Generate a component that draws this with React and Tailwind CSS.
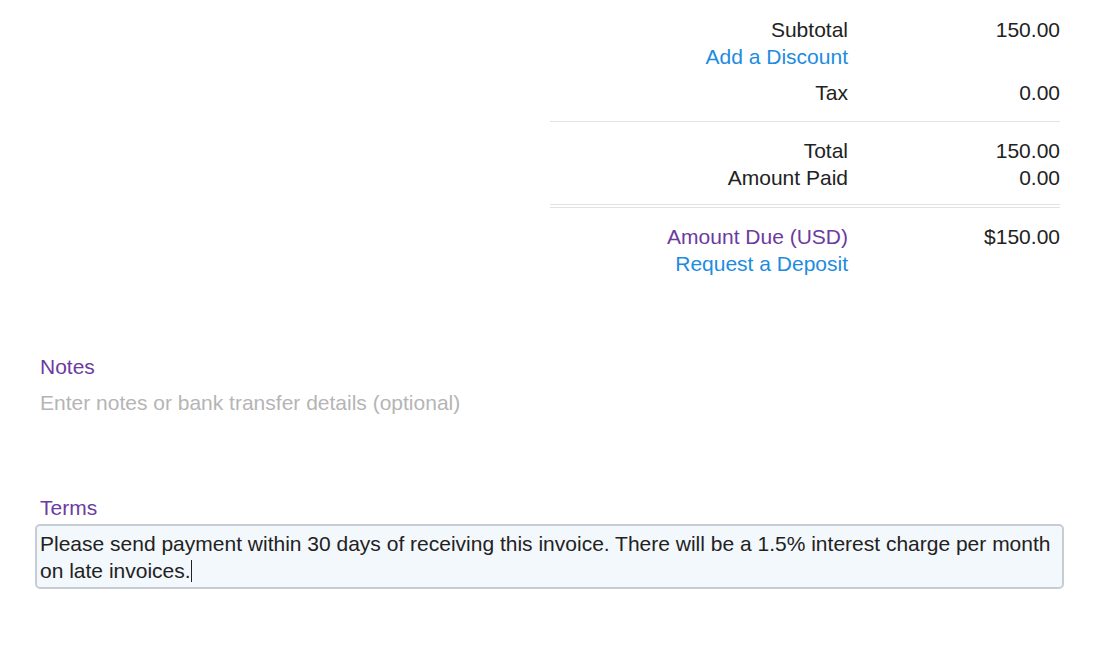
import React from "react";

const font = { fontFamily: '"Liberation Sans", Arial, sans-serif' };

const Row = ({ label, value, labelClass = "text-[#222]", className = "" }) => (
  <div className={`flex ${className}`}>
    <div className={`w-[298px] text-right ${labelClass}`}>{label}</div>
    <div className="flex-1 text-right text-[#222]">{value}</div>
  </div>
);

const App = () => {
  return (
    <div
      className="w-[1115px] h-[672px] bg-white text-[21px] leading-[27px] text-[#222]"
      style={font}
    >
      <div className="flex justify-end pt-[16px] pr-[55px]">
        <div className="w-[510px] flex flex-col">
          <Row label="Subtotal" value="150.00" />
          <Row label={<span className="text-[#1d8ce0]">Add a Discount</span>} value="" />
          <Row label="Tax" value="0.00" className="mt-[9px]" />
          <div className="mt-[15px] border-t border-[#e2e2e2]" />
          <Row label="Total" value="150.00" className="mt-[15px]" />
          <Row label="Amount Paid" value="0.00" />
          <div className="mt-[13px] h-[4px] border-y border-[#e2e2e2]" />
          <Row
            label="Amount Due (USD)"
            labelClass="text-[#6c3b9f]"
            value="$150.00"
            className="mt-[15px]"
          />
          <Row label={<span className="text-[#1d8ce0]">Request a Deposit</span>} value="" />
        </div>
      </div>

      <div className="px-[35px] mt-[76px]">
        <div className="px-[5px] text-[#6c3b9f]">Notes</div>
        <div className="px-[5px] mt-[9px] text-[#b5b5b5]">
          Enter notes or bank transfer details (optional)
        </div>

        <div className="px-[5px] mt-[78px] text-[#6c3b9f]">Terms</div>
        <div className="mt-[3px] w-[1029px] rounded-[5px] border-2 border-[#c6cdd4] bg-[#f3f8fc] px-[3px] pt-[4px] pb-[3px]">
          Please send payment within 30 days of receiving this invoice. There will be a 1.5% interest charge per month
          on late invoices.
          <span className="inline-block w-px h-[22px] bg-[#222] align-[-4px]" />
        </div>
      </div>
    </div>
  );
};

export default App;
